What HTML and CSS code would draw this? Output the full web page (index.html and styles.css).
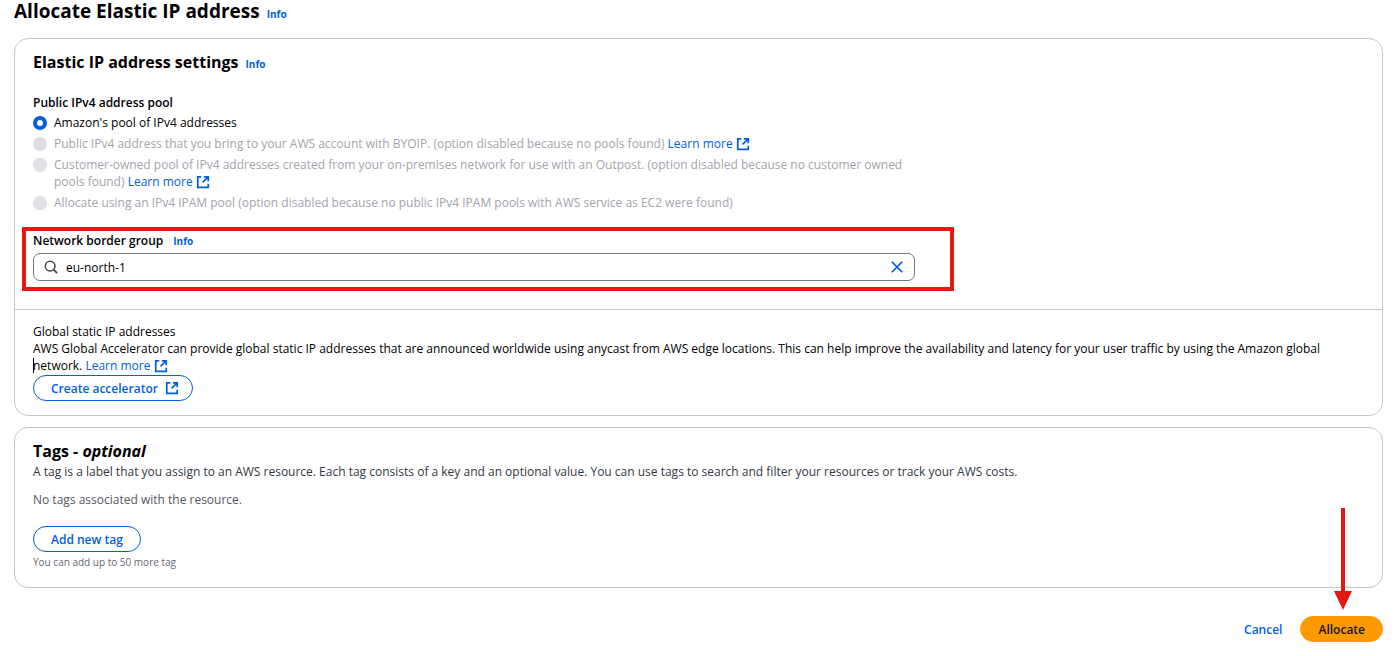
FILE: index.html
```html
<!DOCTYPE html>
<html lang="en">
<head>
<meta charset="utf-8">
<meta name="viewport" content="width=device-width, initial-scale=1">
<title>Allocate Elastic IP address</title>
<link rel="stylesheet" href="styles.css">
</head>
<body>
<svg class="sprite" aria-hidden="true">
  <symbol id="external" viewBox="0 0 16 16">
    <path d="M6 2H2v12h12v-4M9 2h5v5M14 2L7.500 8.500" fill="none" stroke="currentColor" stroke-width="2"/>
  </symbol>
</svg>
<main class="page">
  <header class="page-header">
    <h1 class="page-title">Allocate Elastic IP address</h1>
    <a class="info" href="#">Info</a>
  </header>

  <section class="card">
    <div class="card-main">
      <div class="card-header">
        <h2 class="card-title">Elastic IP address settings</h2>
        <a class="info" href="#">Info</a>
      </div>
      <div class="columns">
        <div class="form">
          <fieldset class="pool">
            <legend class="label">Public IPv4 address pool</legend>
            <div class="option">
              <input class="radio" type="radio" name="pool" id="pool-amazon" checked>
              <label for="pool-amazon">Amazon's pool of IPv4 addresses</label>
            </div>
            <div class="option option-disabled">
              <input class="radio" type="radio" name="pool" id="pool-byoip" disabled>
              <label for="pool-byoip">Public IPv4 address that you bring to your AWS account with BYOIP. (option disabled because no pools found) <a class="link" href="#">Learn more <svg class="icon"><use href="#external"/></svg></a></label>
            </div>
            <div class="option option-disabled">
              <input class="radio" type="radio" name="pool" id="pool-customer" disabled>
              <label for="pool-customer">Customer-owned pool of IPv4 addresses created from your on-premises network for use with an Outpost. (option disabled because no customer owned pools found) <a class="link" href="#">Learn more <svg class="icon"><use href="#external"/></svg></a></label>
            </div>
            <div class="option option-disabled">
              <input class="radio" type="radio" name="pool" id="pool-ipam" disabled>
              <label for="pool-ipam">Allocate using an IPv4 IPAM pool (option disabled because no public IPv4 IPAM pools with AWS service as EC2 were found)</label>
            </div>
          </fieldset>
          <div class="field">
            <div class="field-head">
              <label class="label" for="border-group">Network border group</label>
              <a class="info" href="#">Info</a>
            </div>
            <div class="search">
              <svg class="search-icon" viewBox="0 0 16 16"><circle cx="7" cy="7" r="5.500" fill="none" stroke="currentColor" stroke-width="1.800"/><path d="M11 11L15 15" stroke="currentColor" stroke-width="2"/></svg>
              <input class="search-input" type="text" id="border-group" value="eu-north-1">
              <button class="clear" type="button" aria-label="Clear"><svg class="clear-icon" viewBox="0 0 16 16"><path d="M2 2l12 12M14 2L2 14" stroke="currentColor" stroke-width="2"/></svg></button>
            </div>
          </div>
        </div>
      </div>
    </div>
    <div class="card-footer">
      <p class="text">Global static IP addresses</p>
      <p class="text">AWS Global Accelerator can provide global static IP addresses that are announced worldwide using anycast from AWS edge locations. This can help improve the availability and latency for your user traffic by using the Amazon global <span class="caret">network.</span> <a class="link" href="#">Learn more <svg class="icon"><use href="#external"/></svg></a></p>
      <button class="button" type="button">Create accelerator <svg class="icon button-icon"><use href="#external"/></svg></button>
    </div>
  </section>

  <section class="card card-tags">
    <h2 class="card-title">Tags - <em>optional</em></h2>
    <p class="text description">A tag is a label that you assign to an AWS resource. Each tag consists of a key and an optional value. You can use tags to search and filter your resources or track your AWS costs.</p>
    <p class="text empty">No tags associated with the resource.</p>
    <button class="button" type="button">Add new tag</button>
    <p class="hint">You can add up to 50 more tag</p>
  </section>

  <footer class="actions">
    <button class="button button-link" type="button">Cancel</button>
    <div class="allocate">
      <svg class="arrow" viewBox="0 0 20 102" aria-hidden="true"><path d="M8 0h4v83h7L10 102 1 83h7z" fill="#e81515"/></svg>
      <button class="button button-primary" type="button">Allocate</button>
    </div>
  </footer>
</main>
</body>
</html>
```
FILE: styles.css
```css
* { box-sizing: border-box; }
body {
  margin: 0;
  background: #fff;
  color: #000;
  font: 12px/17px "Open Sans", "Noto Sans", sans-serif;
}
h1, h2, p { margin: 0; }
button, input { font: inherit; }
a { color: #0060df; text-decoration: none; }
.sprite { display: none; }
.page { padding: 0 17px 14px 14px; }
.page-header, .card-header, .field-head {
  display: flex;
  align-items: baseline;
}
.page-header, .card-header { gap: 7px; }
.page-title { font-size: 19px; line-height: 22px; font-weight: 700; }
.card-title { font-size: 16px; line-height: 24px; font-weight: 700; }
.info { font-size: 10px; font-weight: 700; }
.card {
  margin-top: 15px;
  border: 1px solid #c6c6cd;
  border-radius: 14px;
}
.card-main { padding: 11px 18px 28px; }
.card-header { margin-bottom: 20px; }
.columns { display: grid; grid-template-columns: 2fr 1fr; gap: 8px; }
.label { padding: 0; font-weight: 600; }
.pool {
  display: flex;
  flex-direction: column;
  gap: 4px;
  margin: 0;
  padding: 0;
  border: 0;
}
.pool .label { margin-bottom: 3px; }
.option { display: flex; gap: 7px; }
.option-disabled { color: #a4a4ad; }
.radio {
  appearance: none;
  flex: none;
  width: 14px;
  height: 14px;
  margin: 2px 0 0;
  border: 4px solid #0060df;
  border-radius: 50%;
  background: #fff;
}
.radio:disabled { border-color: #dedee3; background: #dedee3; }
.icon { width: 14px; height: 14px; vertical-align: -3px; }
.field { position: relative; margin-top: 21px; }
.field::after {
  content: "";
  position: absolute;
  inset: -5px -39px -10px -11px;
  border: 4px solid #e81515;
  pointer-events: none;
}
.field-head { gap: 10px; }
.search {
  display: flex;
  align-items: center;
  gap: 8px;
  height: 28px;
  margin-top: 3px;
  padding: 0 10px;
  border: 1px solid #72747e;
  border-radius: 7px;
}
.search-icon { width: 14px; height: 14px; color: #424650; }
.search-input {
  flex: 1;
  min-width: 0;
  padding: 0;
  border: 0;
  outline: 0;
  background: none;
  color: inherit;
}
.clear { display: flex; padding: 0; border: 0; background: none; color: #0060df; }
.clear-icon { width: 14px; height: 14px; }
.card-footer { padding: 13px 18px 14px; border-top: 1px solid #c6c6cd; }
.caret { position: relative; }
.caret::before {
  content: "";
  position: absolute;
  top: 1px;
  left: 0;
  width: 1px;
  height: 15px;
  background: #000;
}
.button {
  display: inline-flex;
  align-items: center;
  gap: 7px;
  height: 26px;
  padding: 0 17px;
  border: 1px solid #0060df;
  border-radius: 13px;
  background: #fff;
  color: #0060df;
  font-weight: 600;
}
.card-footer .button { margin-top: 1px; padding-right: 13px; }
.card-tags { margin-top: 11px; padding: 11px 18px 17px; }
.description { color: #333843; }
.empty { margin: 11px 0 18px; color: #565962; }
.hint { margin-top: 2px; color: #656871; font-size: 10px; line-height: 16px; }
.actions { display: flex; justify-content: flex-end; margin-top: 28px; }
.button-link { border-color: transparent; background: none; }
.allocate { position: relative; }
.arrow {
  position: absolute;
  right: 30px;
  bottom: 32px;
  width: 20px;
  height: 102px;
}
.button-primary { border-color: #ff9900; background: #ff9900; color: #0f141a; }
```
